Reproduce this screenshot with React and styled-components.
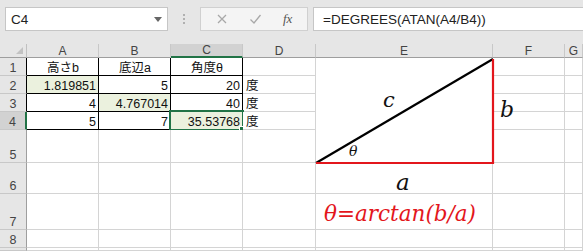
import React from 'react';
import styled, { createGlobalStyle } from 'styled-components';

const GlobalStyle = createGlobalStyle`
  html, body {
    margin: 0;
    padding: 0;
    background: #ffffff;
    overflow: hidden;
  }
  body {
    font-family: "Liberation Sans", "Noto Sans CJK JP", sans-serif;
  }
`;

const Window = styled.div`
  width: 583px;
  height: 251px;
  overflow: hidden;
  display: flex;
  flex-direction: column;
  background: #e6e6e6;
`;

const Toolbar = styled.div`
  flex-shrink: 0;
  display: flex;
  align-items: flex-start;
  height: 44px;
  padding: 7px 0 0 5px;
  box-sizing: border-box;
  background: #e6e6e6;
`;

const NameBox = styled.div`
  width: 163px;
  height: 24px;
  box-sizing: border-box;
  background: #fff;
  border: 1px solid #c6c6c6;
  display: flex;
  align-items: center;
  justify-content: space-between;
  padding: 0 5px 0 5px;
  font-size: 13.5px;
  color: #222;
`;

const DropArrow = styled.span`
  width: 0;
  height: 0;
  border-left: 4px solid transparent;
  border-right: 4px solid transparent;
  border-top: 5px solid #666;
`;

const Grip = styled.div`
  width: 32px;
  height: 24px;
  display: flex;
  flex-direction: column;
  align-items: center;
  justify-content: center;
  gap: 2px;
  span {
    width: 2px;
    height: 2px;
    background: #b0b0b0;
  }
`;

const FxButtons = styled.div`
  width: 108px;
  height: 24px;
  box-sizing: border-box;
  background: #f4f4f4;
  border: 1px solid #d0d0d0;
  display: flex;
  align-items: center;
  justify-content: space-around;
  padding: 0 4px;
  color: #a8a8a8;
`;

const FxText = styled.span`
  font-family: "Liberation Serif", serif;
  font-style: italic;
  font-size: 13px;
  color: #555;
`;

const FormulaInput = styled.div`
  flex: 1;
  height: 24px;
  margin-left: 5px;
  box-sizing: border-box;
  background: #fff;
  border: 1px solid #c6c6c6;
  border-right: none;
  display: flex;
  align-items: center;
  padding-left: 9px;
  font-size: 13.5px;
  color: #222;
`;

const Sheet = styled.div`
  position: relative;
  flex: 1;
  min-height: 0;
  overflow: hidden;
  display: grid;
  grid-template-columns: 27px 72px 72px 72px 73px 177px 72px 1fr;
  grid-template-rows: 14px 18px 18px 18px 18px 33px 31px 36px 18px 1fr;
  background: #fff;
`;

const Corner = styled.div`
  background: #e6e6e6;
  border-right: 1px solid #c0c0c0;
  border-bottom: 1px solid #9e9e9e;
  box-sizing: border-box;
  position: relative;
  &::after {
    content: '';
    position: absolute;
    right: 3px;
    bottom: 3px;
    border-left: 7px solid transparent;
    border-bottom: 7px solid #c2c2c2;
  }
`;

const ColHead = styled.div`
  box-sizing: border-box;
  background: ${({ selected }) => (selected ? '#d2d2d2' : '#e6e6e6')};
  border-right: 1px solid #c8c8c8;
  border-bottom: ${({ selected }) => (selected ? '2px solid #217346' : '1px solid #9e9e9e')};
  display: flex;
  align-items: center;
  justify-content: center;
  font-size: 12px;
  color: #444;
  line-height: 1;
`;

const RowHead = styled.div`
  box-sizing: border-box;
  background: ${({ selected }) => (selected ? '#d2d2d2' : '#e6e6e6')};
  border-bottom: 1px solid #c8c8c8;
  border-right: ${({ selected, edge }) =>
    selected ? '2px solid #217346' : `1px solid ${edge || '#9e9e9e'}`};
  display: flex;
  align-items: flex-end;
  justify-content: center;
  padding-bottom: 1px;
  font-size: 12.5px;
  color: #444;
  line-height: 1;
`;

const Cell = styled.div`
  position: relative;
  box-sizing: border-box;
  background: ${({ fill }) => fill || '#fff'};
  border-right: 1px solid ${({ boxed }) => (boxed ? '#000' : '#d4d4d4')};
  border-bottom: 1px solid ${({ boxed, noBottom }) => (boxed ? '#000' : noBottom ? 'transparent' : '#d4d4d4')};
  display: flex;
  align-items: flex-end;
  justify-content: ${({ align }) =>
    align === 'right' ? 'flex-end' : align === 'center' ? 'center' : 'flex-start'};
  padding: 0 2px 1px 3px;
  font-size: 12.5px;
  color: #111;
  line-height: 1;
  white-space: nowrap;
`;

const ActiveFrame = styled.div`
  position: absolute;
  left: -2px;
  top: -2px;
  right: -2px;
  bottom: -2px;
  border: 2px solid #217346;
  pointer-events: none;
  &::after {
    content: '';
    position: absolute;
    right: -4px;
    bottom: -4px;
    width: 5px;
    height: 5px;
    background: #217346;
    border: 1px solid #fff;
  }
`;

const Drawing = styled.svg`
  position: absolute;
  left: 0;
  top: 0;
  pointer-events: none;
`;

const MathLabel = styled.span`
  position: absolute;
  left: ${({ x }) => x}px;
  top: ${({ y }) => y}px;
  font-family: "DejaVu Serif", "Liberation Serif", serif;
  font-style: italic;
  font-size: ${({ size }) => size}px;
  color: ${({ color }) => color || '#111'};
  line-height: 1;
  white-space: nowrap;
`;

const cols = ['A', 'B', 'C', 'D', 'E', 'F', 'G'];

const rows = [
  [
    { v: '高さb', align: 'center', boxed: true },
    { v: '底辺a', align: 'center', boxed: true },
    { v: '角度θ', align: 'center', boxed: true },
    {},
    { noBottom: true },
    {},
    {},
  ],
  [
    { v: '1.819851', align: 'right', boxed: true, fill: '#ebf1de' },
    { v: '5', align: 'right', boxed: true },
    { v: '20', align: 'right', boxed: true },
    { v: '度' },
    { noBottom: true },
    {},
    {},
  ],
  [
    { v: '4', align: 'right', boxed: true },
    { v: '4.767014', align: 'right', boxed: true, fill: '#ebf1de' },
    { v: '40', align: 'right', boxed: true },
    { v: '度' },
    { noBottom: true },
    {},
    {},
  ],
  [
    { v: '5', align: 'right', boxed: true },
    { v: '7', align: 'right', boxed: true },
    { v: '35.53768', align: 'right', boxed: true, fill: '#ebf1de', active: true },
    { v: '度' },
    { noBottom: true },
    {},
    {},
  ],
  [{}, {}, {}, {}, { noBottom: true }, {}, {}],
  [{}, {}, {}, {}, {}, {}, {}],
  [{}, {}, {}, {}, {}, {}, {}],
  [{}, {}, {}, {}, {}, {}, {}],
  [{}, {}, {}, {}, {}, {}, {}],
];

const App = () => {
  return (
    <Window>
      <GlobalStyle />
      <Toolbar>
        <NameBox>
          <span>C4</span>
          <DropArrow />
        </NameBox>
        <Grip>
          <span />
          <span />
          <span />
        </Grip>
        <FxButtons>
          <svg width="12" height="12" viewBox="0 0 12 12">
            <path d="M2 2 L10 10 M10 2 L2 10" stroke="#a8a8a8" strokeWidth="1.3" fill="none" />
          </svg>
          <svg width="13" height="12" viewBox="0 0 13 12">
            <path d="M1.5 6.5 L5 10 L11.5 2" stroke="#a8a8a8" strokeWidth="1.3" fill="none" />
          </svg>
          <FxText>fx</FxText>
        </FxButtons>
        <FormulaInput>=DEGREES(ATAN(A4/B4))</FormulaInput>
      </Toolbar>
      <Sheet>
        <Corner />
        {cols.map((c) => (
          <ColHead key={c} selected={c === 'C'}>
            {c}
          </ColHead>
        ))}
        {rows.map((r, i) => (
          <React.Fragment key={i}>
            <RowHead selected={i === 3} edge={i < 3 ? '#000' : undefined}>
              {i < 8 ? i + 1 : ''}
            </RowHead>
            {r.map((cell, j) => (
              <Cell
                key={j}
                align={cell.align}
                boxed={cell.boxed}
                fill={cell.fill}
                noBottom={cell.noBottom}
              >
                {cell.v}
                {cell.active && <ActiveFrame />}
              </Cell>
            ))}
          </React.Fragment>
        ))}
        <Drawing width="583" height="207" viewBox="0 0 583 207">
          <line x1="316" y1="119" x2="493" y2="15" stroke="#000" strokeWidth="2.2" />
          <polyline points="316,119 493,119 493,15" stroke="#e3161c" strokeWidth="2.2" fill="none" />
        </Drawing>
        <MathLabel x={383} y={46} size={21}>c</MathLabel>
        <MathLabel x={500} y={55} size={22}>b</MathLabel>
        <MathLabel x={349} y={100} size={14}>θ</MathLabel>
        <MathLabel x={396} y={127} size={23}>a</MathLabel>
        <MathLabel x={324} y={159} size={21.5} color="#e3161c">θ=arctan(b/a)</MathLabel>
      </Sheet>
    </Window>
  );
};

export default App;
